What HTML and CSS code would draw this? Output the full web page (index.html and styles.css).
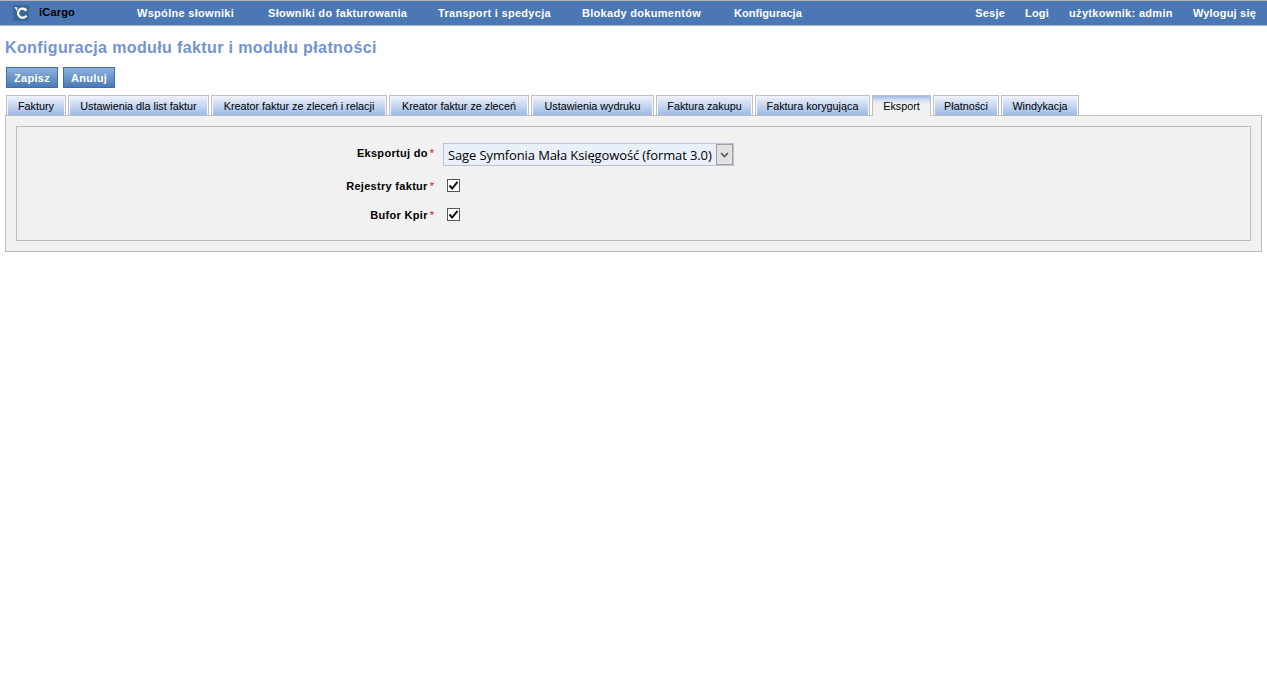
FILE: index.html
```html
<!DOCTYPE html>
<html lang="pl">
<head>
<meta charset="utf-8">
<title>Konfiguracja modułu faktur i modułu płatności</title>
<link rel="stylesheet" href="styles.css">
</head>
<body>
<header class="topbar">
  <div class="brand">
    <svg class="logo" width="16" height="16" viewBox="0 0 16 16" aria-hidden="true">
      <rect width="16" height="16" fill="#3a6999"/>
      <path d="M13.5 5.6 A4.6 4.6 0 1 0 13.5 10.6" fill="none" stroke="#fff" stroke-width="2.2"/>
      <path d="M1.5 2 L4.5 2.5 L3.8 6 Z" fill="#fff"/>
      <path d="M8.5 3.8 L12.5 2.8 L12.5 6.5 Z" fill="#fff"/>
    </svg>
    <span class="brand-name">iCargo</span>
  </div>
  <nav class="menu">
    <a>Wspólne słowniki</a>
    <a>Słowniki do fakturowania</a>
    <a>Transport i spedycja</a>
    <a>Blokady dokumentów</a>
    <a>Konfiguracja</a>
  </nav>
  <nav class="menu-right">
    <a>Sesje</a>
    <a>Logi</a>
    <a class="user">użytkownik: admin</a>
    <a>Wyloguj się</a>
  </nav>
</header>
<main class="page">
  <h1 class="title">Konfiguracja modułu faktur i modułu płatności</h1>
  <div class="actions">
    <button class="btn" type="button">Zapisz</button>
    <button class="btn" type="button">Anuluj</button>
  </div>
  <ul class="tabs">
    <li class="tab">Faktury</li>
    <li class="tab">Ustawienia dla list faktur</li>
    <li class="tab">Kreator faktur ze zleceń i relacji</li>
    <li class="tab">Kreator faktur ze zleceń</li>
    <li class="tab">Ustawienia wydruku</li>
    <li class="tab">Faktura zakupu</li>
    <li class="tab">Faktura korygująca</li>
    <li class="tab active">Eksport</li>
    <li class="tab">Płatności</li>
    <li class="tab">Windykacja</li>
  </ul>
  <section class="panel">
    <div class="fieldset">
      <div class="row row-select">
        <label class="label label-select">Eksportuj do<span class="req">*</span></label>
        <div class="select">
          <span class="select-value">Sage Symfonia Mała Księgowość (format 3.0)</span>
          <span class="select-arrow">
            <svg width="9" height="6" viewBox="0 0 9 6" aria-hidden="true"><path d="M1 1 L4.5 4.5 L8 1" fill="none" stroke="#555" stroke-width="1.6"/></svg>
          </span>
        </div>
      </div>
      <div class="row">
        <label class="label">Rejestry faktur<span class="req">*</span></label>
        <span class="check"><svg width="11" height="11" viewBox="0 0 11 11" aria-hidden="true"><path d="M1.5 5.5 L4.2 8.5 L9.5 1.8" fill="none" stroke="#111" stroke-width="2"/></svg></span>
      </div>
      <div class="row">
        <label class="label">Bufor Kpir<span class="req">*</span></label>
        <span class="check"><svg width="11" height="11" viewBox="0 0 11 11" aria-hidden="true"><path d="M1.5 5.5 L4.2 8.5 L9.5 1.8" fill="none" stroke="#111" stroke-width="2"/></svg></span>
      </div>
    </div>
  </section>
</main>
</body>
</html>
```
FILE: styles.css
```css
* { box-sizing: border-box; }
html, body { margin: 0; padding: 0; background: #fff; }
body { font-family: "Liberation Sans", Arial, sans-serif; font-size: 11px; color: #000; }

.topbar {
  display: flex;
  align-items: center;
  height: 26px;
  background: #4b77b5;
  border-top: 1px solid #b5b5b5;
  border-bottom: 1px solid #b5b5b5;
  color: #fff;
  font-weight: bold;
  font-size: 11px;
  padding: 0 11px 0 13px;
}
.brand { display: flex; align-items: center; width: 124px; flex: none; }
.logo { display: block; flex: none; }
.brand-name { color: #000; margin-left: 10px; margin-top: -2px; letter-spacing: 0.2px; }
.menu {
  display: grid;
  grid-template-columns: 131px 170px 144px 152px auto;
  flex: 1;
}
.menu-right { display: flex; gap: 20px; }
.menu a, .menu-right a { color: #fff; letter-spacing: 0.3px; white-space: nowrap; }
.menu a:last-child { letter-spacing: 0.05px; }
.menu-right a { letter-spacing: 0.2px; }
.menu-right a.user { letter-spacing: 0.32px; }

.page { padding: 0 5px; }
.title {
  margin: 13px 0 0;
  font-size: 16px;
  line-height: 18px;
  font-weight: bold;
  color: #7393d0;
  letter-spacing: 0.38px;
}
.actions { display: flex; gap: 5px; margin: 10px 0 0 1px; }
.btn {
  height: 21px;
  padding: 0 7px;
  border: 1px solid #3f6ea8;
  background: linear-gradient(#8db2dd, #4a7ab5);
  color: #fff;
  font: bold 11px "Liberation Sans", Arial, sans-serif;
  letter-spacing: 0.3px;
}
.tabs {
  display: grid;
  grid-template-columns: 60px 141px 176px 140px 123px 97px 115px 59px 66px 78px;
  gap: 2px;
  align-items: start;
  list-style: none;
  margin: 7px 0 0 1px;
  padding: 0;
  position: relative;
  z-index: 1;
}
.tab {
  height: 20px;
  line-height: 21px;
  font-size: 10.8px;
  text-align: center;
  white-space: nowrap;
  border: 1px solid #c0c0c0;
  border-bottom: 0;
  background: linear-gradient(#f0f3fa, #9dbbe8);
  box-shadow: inset 1px 0 #f4f6fb, inset -1px 0 #f4f6fb;
}
.tab.active {
  height: 21px;
  background: linear-gradient(#9dbbe8 0, #dfe6f2 5px, #f1f1f1 9px);
  box-shadow: none;
}
.panel {
  margin-top: -1px;
  padding: 10px;
  height: 137px;
  background: #f1f1f1;
  border: 1px solid #bdbdbd;
}
.fieldset {
  height: 115px;
  border: 1px solid #bdbdbd;
  padding-top: 16px;
}
.row {
  display: flex;
  align-items: center;
  height: 29px;
}
.row-select { height: 23px; margin-bottom: 5px; }
.label {
  width: 417px;
  text-align: right;
  font-weight: bold;
  font-size: 11px;
  letter-spacing: 0.3px;
}
.label-select { padding-bottom: 3px; }
.req { color: #e00; margin-left: 2px; font-weight: normal; letter-spacing: 0; }
.select {
  display: flex;
  align-items: stretch;
  margin-left: 9px;
  height: 23px;
  width: 291px;
  border: 1px solid #b9c3d1;
  background: #e9f0f9;
}
.select-value {
  flex: 1;
  padding-left: 4px;
  font: 13px/23px "Open Sans", sans-serif;
  letter-spacing: -0.12px;
  white-space: nowrap;
  overflow: hidden;
}
.select-arrow {
  flex: none;
  width: 17px;
  display: flex;
  align-items: center;
  justify-content: center;
  background: #e2e2e2;
  border: 1px solid #a0a0a0;
}
.check {
  margin-left: 13px;
  width: 13px;
  height: 13px;
  display: flex;
  align-items: center;
  justify-content: center;
  background: #fff;
  border: 1px solid #555;
}
```
